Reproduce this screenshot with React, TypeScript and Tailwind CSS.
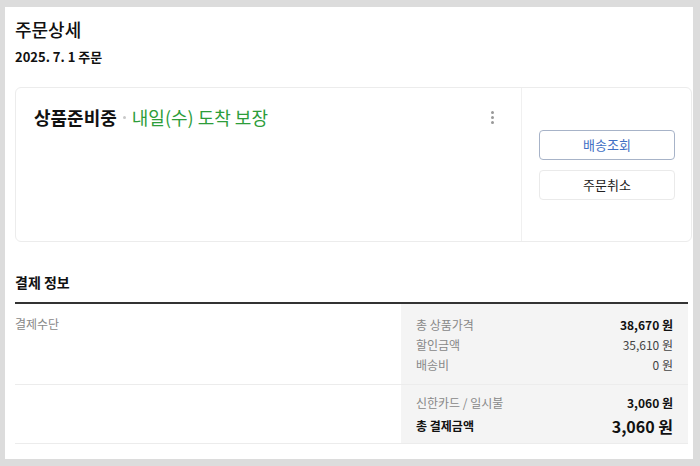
import React from "react";

const font = { fontFamily: '"Noto Sans CJK KR", "Noto Sans", sans-serif' };

export default function App() {
  return (
    <div
      className="w-[700px] h-[466px] bg-[#dcdcdc] pl-[5px] pt-[7px] pr-[7px] pb-[7px]"
      style={font}
    >
      <div className="bg-white h-full pl-[10px] pr-[1px] flex flex-col">
        <h1 className="mt-[10px] text-[18px] leading-[24px] font-medium text-[#111]">주문상세</h1>
        <p className="mt-[7px] text-[13px] leading-[18px] font-bold text-[#111]">2025. 7. 1 주문</p>

        <div className="mt-[21px] h-[155px] border border-[#ececec] rounded-[6px] flex">
          <div className="flex-1 flex items-start justify-between pl-[18px] pr-[27px] pt-[16px] border-r border-[#f0f0f0]">
            <div className="text-[18px] leading-[26px] flex items-center">
              <span className="font-bold text-[#111]">상품준비중</span>
              <span className="w-[3px] h-[3px] rounded-full bg-[#c8c8c8] mx-[6px]" />
              <span className="text-[#2d9d3a]">내일(수) 도착 보장</span>
            </div>
            <div className="flex flex-col gap-[2px] mt-[7px]">
              <span className="w-[3px] h-[3px] rounded-full bg-[#999]" />
              <span className="w-[3px] h-[3px] rounded-full bg-[#999]" />
              <span className="w-[3px] h-[3px] rounded-full bg-[#999]" />
            </div>
          </div>
          <div className="w-[169px] flex flex-col pl-[17px] pt-[42px] gap-[10px]">
            <button className="w-[136px] h-[30px] rounded-[4px] border border-[#a7b3c8] text-[13px] text-[#3f6fc4]">
              배송조회
            </button>
            <button className="w-[136px] h-[30px] rounded-[4px] border border-[#eaeaea] text-[13px] text-[#222]">
              주문취소
            </button>
          </div>
        </div>

        <h2 className="mt-[30px] text-[14px] leading-[20px] font-bold text-[#111]">결제 정보</h2>
        <div className="mt-[10px] w-[673px] border-t-2 border-[#333]">
          <div className="flex border-b border-[#ececec] h-[81px]">
            <div className="flex-1 pt-[11px] text-[12px] leading-[18px] text-[#888]">결제수단</div>
            <div className="w-[287px] bg-[#f4f4f4] pl-[15px] pr-[15px] pt-[11px] text-[12px] leading-[20px]">
              <div className="flex justify-between">
                <span className="text-[#888]">총 상품가격</span>
                <span className="font-bold text-[#111]">38,670 원</span>
              </div>
              <div className="flex justify-between">
                <span className="text-[#888]">할인금액</span>
                <span className="text-[#444]">35,610 원</span>
              </div>
              <div className="flex justify-between">
                <span className="text-[#888]">배송비</span>
                <span className="text-[#444]">0 원</span>
              </div>
            </div>
          </div>
          <div className="flex border-b border-[#ececec] h-[59px]">
            <div className="flex-1" />
            <div className="w-[287px] bg-[#f4f4f4] pl-[15px] pr-[15px] pt-[8px] text-[12px]">
              <div className="flex justify-between items-center leading-[20px]">
                <span className="text-[#888]">신한카드 / 일시불</span>
                <span className="font-bold text-[#111]">3,060 원</span>
              </div>
              <div className="flex justify-between items-center mt-[2px] leading-[22px]">
                <span className="font-bold text-[#111]">총 결제금액</span>
                <span className="font-bold text-[#111] text-[16px]">3,060 원</span>
              </div>
            </div>
          </div>
        </div>
      </div>
    </div>
  );
}
